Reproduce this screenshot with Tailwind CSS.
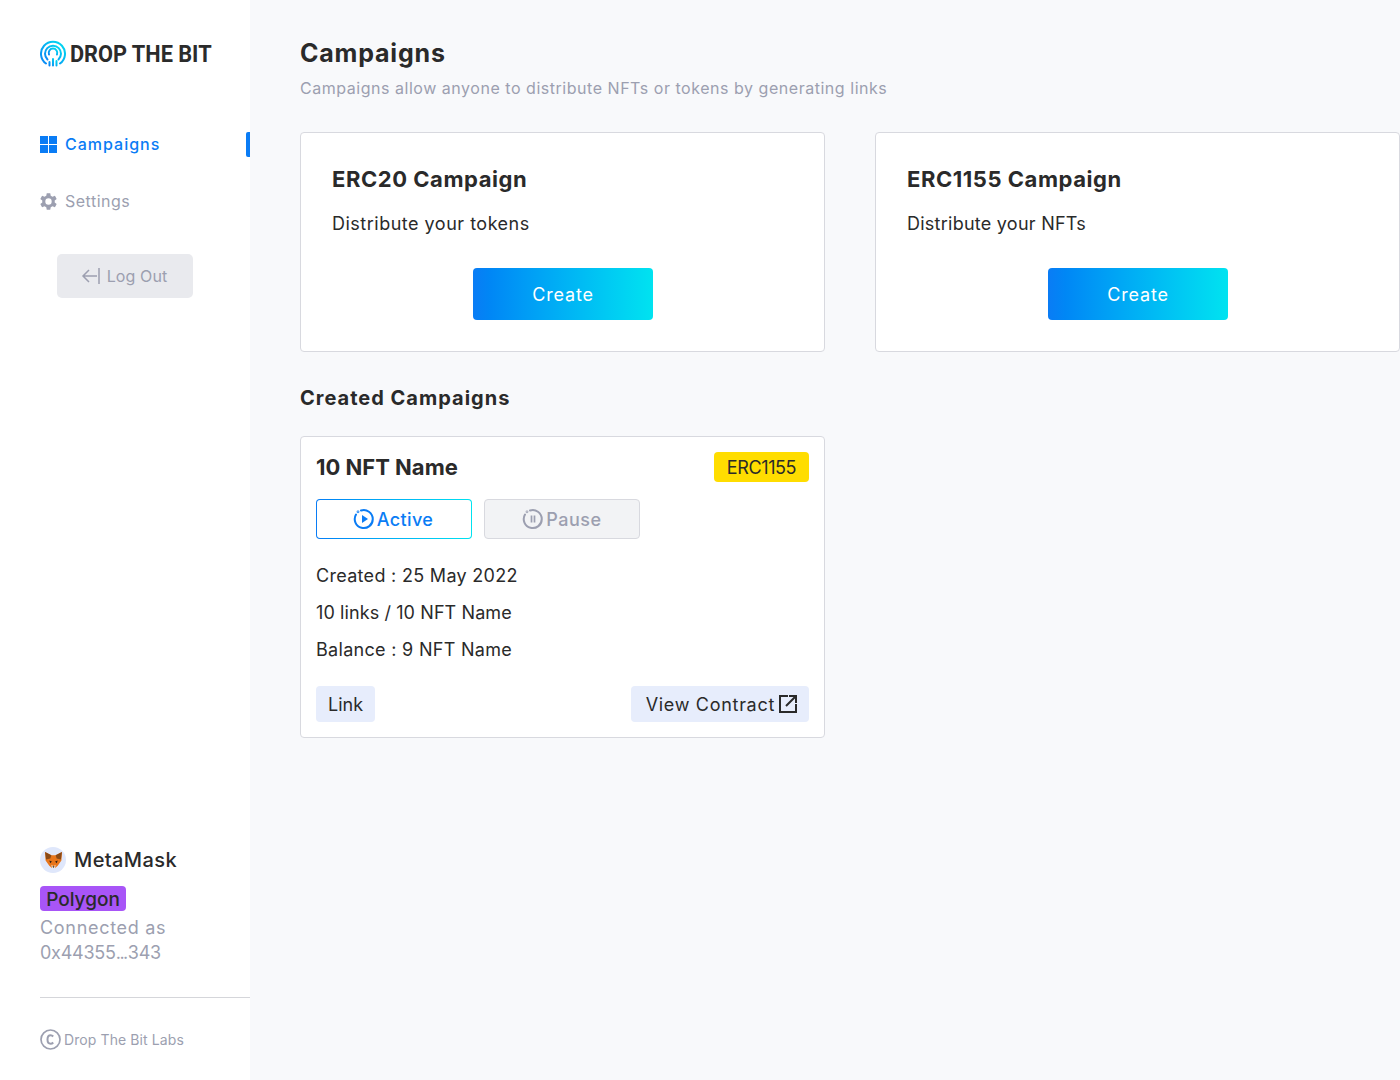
<!DOCTYPE html>
<html lang="en">
<head>
    <meta charset="UTF-8">
    <title>Drop The Bit - Campaigns</title>
    <script src="https://cdn.jsdelivr.net/npm/@tailwindcss/browser@4"></script>
</head>
<body class="font-['Inter','Noto_Sans',sans-serif] bg-[#f8f9fb] text-[#2a2a2a]">
<div class="flex h-[1080px] w-[1400px] overflow-hidden">
    <!-- sidebar -->
    <aside class="w-[250px] shrink-0 bg-white flex flex-col pl-10">
        <div class="flex items-center gap-[4px] mt-10 h-[27px]">
            <svg width="26" height="27" viewBox="0 0 26 27" fill="none">
                <defs>
                    <linearGradient id="logoGrad" x1="0" y1="1" x2="1" y2="0">
                        <stop offset="0" stop-color="#0a84f5"/>
                        <stop offset="1" stop-color="#00e0f0"/>
                    </linearGradient>
                </defs>
                <g stroke="url(#logoGrad)" stroke-width="2" stroke-linecap="round">
                    <path d="M6 23.500A12 12 0 1 1 20 23.500"/>
                    <path d="M7.500 19.500A8 8 0 1 1 18.500 19.500"/>
                    <path d="M9 14.500A4.300 4.300 0 1 1 17 14.500"/>
                    <path d="M9.500 22V25.500M13 19V25.500M16.500 21V25.500"/>
                </g>
            </svg>
            <span class="font-['Roboto',sans-serif] font-bold text-[24px] leading-none text-[#2b2b2b] whitespace-nowrap origin-left scale-x-[0.905]">DROP THE BIT</span>
        </div>

        <nav class="mt-[65px]">
            <a class="flex items-center justify-between h-[25px] text-[#0a7cf5] text-[16px]">
                <span class="flex items-center gap-[8px]">
                    <svg width="17" height="17" viewBox="0 0 17 17" fill="#0a7cf5">
                        <rect width="8" height="8"/><rect x="9" width="8" height="8"/>
                        <rect y="9" width="8" height="8"/><rect x="9" y="9" width="8" height="8"/>
                    </svg>
                    <span class="font-medium tracking-[1px] -translate-y-px">Campaigns</span>
                </span>
                <span class="w-[4px] h-[25px] bg-[#0a7cf5] rounded-l-[2px]"></span>
            </a>
            <a class="flex items-center gap-[8px] mt-[32px] h-[25px] text-[#9c9fb0] text-[16px]">
                <svg width="17" height="17" viewBox="1.500 0.300 21 21.400" fill="#9c9fb0">
                    <path fill-rule="evenodd" d="M14.200 0.500h-4.400l-.6 3.200c-.8.300-1.500.700-2.200 1.300L3.900 3.900 1.700 7.700l2.500 2.100c-.1.800-.1 1.600 0 2.400l-2.500 2.100 2.200 3.800 3.100-1.100c.7.600 1.400 1 2.200 1.300l.6 3.200h4.400l.6-3.200c.8-.3 1.500-.7 2.200-1.300l3.100 1.100 2.200-3.800-2.500-2.100c.1-.8.100-1.600 0-2.400l2.500-2.100-2.200-3.800L17 5c-.7-.6-1.400-1-2.200-1.300zM12 7a4 4 0 1 1 0 8 4 4 0 0 1 0-8z"/>
                </svg>
                <span class="tracking-[0.5px] -translate-y-px">Settings</span>
            </a>
        </nav>

        <button class="flex items-center justify-center gap-[7px] ml-[17px] mt-[40px] pr-[2px] w-[136px] h-[44px] bg-[#e9eaee] rounded-[5px] text-[16px] tracking-[0.1px] text-[#9c9fb0]">
            <svg width="19" height="18" viewBox="0 0 19 18" fill="none" stroke="#9c9fb0" stroke-width="1.500">
                <path d="M18 1V17M16 9H2M8 3L2 9L8 15"/>
            </svg>
            Log Out
        </button>

        <div class="mt-auto">
            <div class="flex items-center gap-[8px] text-[20px] h-[26px]">
                <span class="w-[26px] h-[26px] rounded-full bg-[#dfe7fb] flex items-center justify-center">
                    <svg width="19" height="17" viewBox="0 0 18 16">
                        <path d="M1 0L7 3H11L17 0L16.500 8L13 13L10.500 15H7.500L5 13L1.500 8Z" fill="#e8761c"/>
                        <path d="M1 0L7 3L6 6L2 7Z" fill="#8a4a17"/>
                        <path d="M17 0L11 3L12 6L16 7Z" fill="#8a4a17"/>
                        <path d="M7 12L9 13.500L11 12L10.500 15H7.500Z" fill="#f3e3d0"/>
                        <path d="M5 8L7.500 9L6 10.500ZM13 8L10.500 9L12 10.500Z" fill="#2d2118"/>
                        <path d="M8 13.500H10L9 15Z" fill="#2d2118"/>
                    </svg>
                </span>
                <span class="font-medium tracking-[0.4px]">MetaMask</span>
            </div>
            <div class="mt-[13px] w-[86px] h-[25px] bg-[#a855f7] rounded-[4px] flex items-center justify-center pt-[3px] text-[19px] font-medium text-[#2a2a2a]">Polygon</div>
            <p class="mt-[4px] text-[18px] leading-[25px] text-[#9c9fb0]"><span class="tracking-[0.7px]">Connected as</span><br><span class="tracking-[-0.25px]">0x44355</span><span class="tracking-[-1.5px]">...</span><span class="ml-[1px] tracking-[-0.25px]">343</span></p>
            <div class="mt-[32px] border-t border-[#d5d6da]"></div>
            <div class="flex items-center gap-[3px] mt-[31px] mb-[30px] h-[21px] text-[14px] tracking-[0.1px] text-[#9c9fb0]">
                <svg width="21" height="21" viewBox="0 0 21 21" fill="none" stroke="#9c9fb0" stroke-width="1.700">
                    <circle cx="10.500" cy="10.500" r="9.500"/>
                    <path d="M13.200 7.500C12.500 6.700 11.600 6.300 10.600 6.300C8.700 6.300 7.500 8 7.500 10.500C7.500 13 8.700 14.700 10.600 14.700C11.600 14.700 12.500 14.300 13.200 13.500" stroke-width="2"/>
                </svg>
                Drop The Bit Labs
            </div>
        </div>
    </aside>

    <!-- main -->
    <main class="flex-1 pl-[50px] pt-[37px]">
        <h1 class="text-[25px] leading-[32px] font-bold tracking-[0.8px]">Campaigns</h1>
        <p class="mt-[7px] text-[16px] leading-[24px] tracking-[0.53px] text-[#9c9fb0]">Campaigns allow anyone to distribute NFTs or tokens by generating links</p>

        <div class="mt-[32px] grid grid-cols-[525px_525px] gap-[50px]">
            <section class="h-[220px] bg-white border border-[#d8d9df] rounded-[4px] pl-[31px] pt-[30px]">
                <h2 class="text-[22px] leading-[32px] font-bold tracking-[0.55px]">ERC20 Campaign</h2>
                <p class="mt-[17px] text-[18px] leading-[24px] tracking-[0.5px]">Distribute your tokens</p>
                <button class="block ml-[141px] mt-[32px] w-[180px] h-[52px] rounded-[4px] bg-linear-to-r from-[#0a7cf5] to-[#00e3f0] text-white text-[18px] tracking-[0.8px]">Create</button>
            </section>
            <section class="h-[220px] bg-white border border-[#d8d9df] rounded-[4px] pl-[31px] pt-[30px]">
                <h2 class="text-[22px] leading-[32px] font-bold tracking-[0.55px]">ERC1155 Campaign</h2>
                <p class="mt-[17px] text-[18px] leading-[24px] tracking-[0.25px]">Distribute your NFTs</p>
                <button class="block ml-[141px] mt-[32px] w-[180px] h-[52px] rounded-[4px] bg-linear-to-r from-[#0a7cf5] to-[#00e3f0] text-white text-[18px] tracking-[0.8px]">Create</button>
            </section>
        </div>

        <h2 class="mt-[31px] text-[20px] leading-[30px] font-bold tracking-[1px]">Created Campaigns</h2>

        <section class="mt-[23px] w-[525px] h-[302px] bg-white border border-[#d8d9df] rounded-[4px] px-[15px] pt-[15px]">
            <div class="flex items-center justify-between h-[30px]">
                <h3 class="text-[22px] font-bold">10 NFT Name</h3>
                <span class="w-[95px] h-[30px] bg-[#ffdd00] rounded-[4px] flex items-center justify-center text-[18px] tracking-[-0.4px]">ERC1155</span>
            </div>
            <div class="flex gap-[12px] mt-[17px]">
                <div class="w-[156px] h-[40px] rounded-[4px] p-px bg-linear-to-r from-[#0a7cf5] to-[#00e3f0]">
                    <div class="h-full bg-white rounded-[3px] flex items-center justify-center gap-[2px] pr-[2px] text-[#0a7cf5] text-[18px] font-medium tracking-[0.4px]">
                        <svg width="22" height="22" viewBox="0 0 22 22" fill="none" stroke="#0a7cf5" stroke-width="2">
                            <path d="M8 2.500A9 9 0 1 1 3 6.500" stroke-linecap="round"/>
                            <circle cx="5" cy="3.800" r="0.400"/>
                            <path d="M9 7L15 11L9 15Z" fill="#0a7cf5" stroke="none"/>
                        </svg>
                        Active
                    </div>
                </div>
                <div class="w-[156px] h-[40px] rounded-[4px] border border-[#d8d9df] bg-[#f2f3f5] flex items-center justify-center gap-[2px] text-[#9c9fb0] text-[18px] font-medium tracking-[0.5px]">
                    <svg width="22" height="22" viewBox="0 0 22 22" fill="none" stroke="#9c9fb0" stroke-width="2">
                        <path d="M8 2.500A9 9 0 1 1 3 6.500" stroke-linecap="round"/>
                        <circle cx="5" cy="3.800" r="0.400"/>
                        <path d="M9.500 7.500V14.500M12.500 7.500V14.500" stroke-width="1.700"/>
                    </svg>
                    Pause
                </div>
            </div>
            <div class="mt-[18px] text-[18px] leading-[37px]">
                <p class="tracking-[0.3px]">Created : 25 May 2022</p>
                <p class="tracking-[0.1px]">10 links / 10 NFT Name</p>
                <p class="tracking-[0.3px]">Balance : 9 NFT Name</p>
            </div>
            <div class="flex items-center justify-between mt-[18px]">
                <a class="w-[59px] h-[36px] bg-[#e7edfc] rounded-[4px] flex items-center justify-center text-[18px]">Link</a>
                <a class="w-[178px] h-[36px] bg-[#e7edfc] rounded-[4px] flex items-center justify-end gap-[3px] pr-[11px] text-[18px] tracking-[0.7px]">
                    View Contract
                    <svg width="20" height="20" viewBox="0 0 20 20" fill="none" stroke="#2a2a2a" stroke-width="2">
                        <path d="M10 2H2V18H18V10M8 12L17 3M11 2H18V9"/>
                    </svg>
                </a>
            </div>
        </section>
    </main>
</div>
</body>
</html>
